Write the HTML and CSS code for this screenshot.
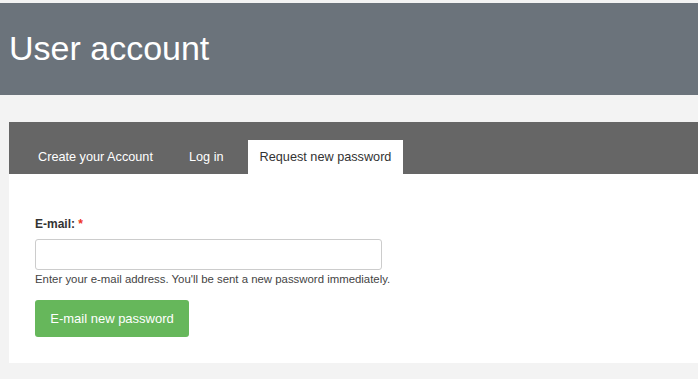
FILE: index.html
```html
<!DOCTYPE html>
<html lang="en">
<head>
    <meta charset="UTF-8">
    <title>User account</title>
    <link rel="stylesheet" href="styles.css">
</head>
<body>
    <header class="page-header">
        <h1 class="page-title">User account</h1>
    </header>
    <main class="main">
        <div class="panel">
            <ul class="tabs">
                <li class="tab"><a href="#">Create your Account</a></li>
                <li class="tab"><a href="#">Log in</a></li>
                <li class="tab active"><a href="#">Request new password</a></li>
            </ul>
            <form class="panel-body">
                <label class="form-label" for="email">E-mail: <span class="required">*</span></label>
                <input class="form-input" type="text" id="email">
                <div class="form-help">Enter your e-mail address. You'll be sent a new password immediately.</div>
                <button class="submit-button" type="button">E-mail new password</button>
            </form>
        </div>
    </main>
</body>
</html>
```
FILE: styles.css
```css
body {
    margin: 0;
    font-family: "Liberation Sans", Arial, sans-serif;
    background-color: #f3f3f3;
    color: #333;
}

.page-header {
    margin-top: 3px;
    height: 92px;
    background-color: #6b737b;
    display: flex;
    align-items: center;
    padding-left: 9px;
}

.page-title {
    margin: 0;
    color: white;
    font-weight: normal;
    font-size: 34px;
    line-height: 1;
    padding-bottom: 3px;
}

.main {
    padding: 27px 0 0 9px;
}

.panel {
    background-color: white;
}

.tabs {
    list-style: none;
    margin: 0;
    padding: 18px 0 0 17px;
    height: 34px;
    background-color: #666;
    display: flex;
    gap: 12px;
}

.tab a {
    display: block;
    height: 34px;
    line-height: 34px;
    padding: 0 12px;
    font-size: 12.7px;
    color: white;
    text-decoration: none;
}

.tab.active a {
    background-color: white;
    color: #333;
}

.panel-body {
    padding: 42px 26px 26px;
}

.form-label {
    display: block;
    font-size: 12px;
    font-weight: bold;
    line-height: 16px;
    margin-bottom: 7px;
}

.required {
    color: #e32;
}

.form-input {
    display: block;
    box-sizing: border-box;
    width: 347px;
    height: 31px;
    border: 1px solid #ccc;
    border-radius: 3px;
    margin: 0;
}

.form-help {
    font-size: 11.4px;
    line-height: 14px;
    margin-top: 2px;
    color: #444;
}

.submit-button {
    display: block;
    margin-top: 14px;
    width: 154px;
    height: 37px;
    background-color: #66b75b;
    color: white;
    border: none;
    border-radius: 3px;
    font-family: "Liberation Sans", Arial, sans-serif;
    font-size: 13px;
    cursor: pointer;
}
```
